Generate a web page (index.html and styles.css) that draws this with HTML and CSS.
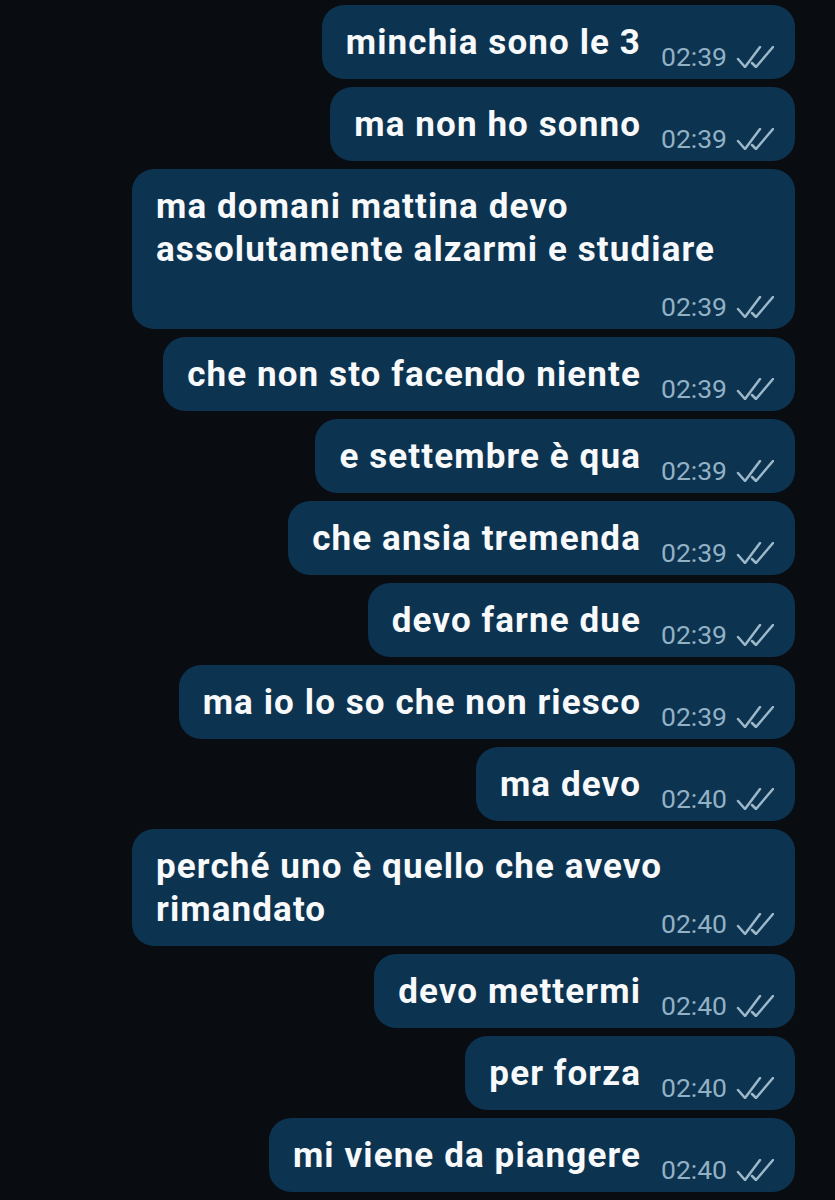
FILE: index.html
```html
<!DOCTYPE html>
<html lang="it">
<head>
<meta charset="utf-8">
<title>Chat</title>
<link rel="stylesheet" href="styles.css">
</head>
<body>
<div class="chat">
  <div class="bubble"><p class="text">minchia sono le 3<span class="meta"><span class="time">02:39</span><svg class="ticks" viewBox="0 0 38 22"><path d="M2 13 L9 21 L24 1"/><path d="M16 17 L20 21 L37 1"/></svg></span></p></div>
  <div class="bubble"><p class="text">ma non ho sonno<span class="meta"><span class="time">02:39</span><svg class="ticks" viewBox="0 0 38 22"><path d="M2 13 L9 21 L24 1"/><path d="M16 17 L20 21 L37 1"/></svg></span></p></div>
  <div class="bubble"><p class="text">ma domani mattina devo assolutamente alzarmi e studiare<span class="meta"><span class="time">02:39</span><svg class="ticks" viewBox="0 0 38 22"><path d="M2 13 L9 21 L24 1"/><path d="M16 17 L20 21 L37 1"/></svg></span></p></div>
  <div class="bubble"><p class="text">che non sto facendo niente<span class="meta"><span class="time">02:39</span><svg class="ticks" viewBox="0 0 38 22"><path d="M2 13 L9 21 L24 1"/><path d="M16 17 L20 21 L37 1"/></svg></span></p></div>
  <div class="bubble"><p class="text">e settembre è qua<span class="meta"><span class="time">02:39</span><svg class="ticks" viewBox="0 0 38 22"><path d="M2 13 L9 21 L24 1"/><path d="M16 17 L20 21 L37 1"/></svg></span></p></div>
  <div class="bubble"><p class="text">che ansia tremenda<span class="meta"><span class="time">02:39</span><svg class="ticks" viewBox="0 0 38 22"><path d="M2 13 L9 21 L24 1"/><path d="M16 17 L20 21 L37 1"/></svg></span></p></div>
  <div class="bubble"><p class="text">devo farne due<span class="meta"><span class="time">02:39</span><svg class="ticks" viewBox="0 0 38 22"><path d="M2 13 L9 21 L24 1"/><path d="M16 17 L20 21 L37 1"/></svg></span></p></div>
  <div class="bubble"><p class="text">ma io lo so che non riesco<span class="meta"><span class="time">02:39</span><svg class="ticks" viewBox="0 0 38 22"><path d="M2 13 L9 21 L24 1"/><path d="M16 17 L20 21 L37 1"/></svg></span></p></div>
  <div class="bubble"><p class="text">ma devo<span class="meta"><span class="time">02:40</span><svg class="ticks" viewBox="0 0 38 22"><path d="M2 13 L9 21 L24 1"/><path d="M16 17 L20 21 L37 1"/></svg></span></p></div>
  <div class="bubble"><p class="text">perché uno è quello che avevo rimandato<span class="meta"><span class="time">02:40</span><svg class="ticks" viewBox="0 0 38 22"><path d="M2 13 L9 21 L24 1"/><path d="M16 17 L20 21 L37 1"/></svg></span></p></div>
  <div class="bubble"><p class="text">devo mettermi<span class="meta"><span class="time">02:40</span><svg class="ticks" viewBox="0 0 38 22"><path d="M2 13 L9 21 L24 1"/><path d="M16 17 L20 21 L37 1"/></svg></span></p></div>
  <div class="bubble"><p class="text">per forza<span class="meta"><span class="time">02:40</span><svg class="ticks" viewBox="0 0 38 22"><path d="M2 13 L9 21 L24 1"/><path d="M16 17 L20 21 L37 1"/></svg></span></p></div>
  <div class="bubble"><p class="text">mi viene da piangere<span class="meta"><span class="time">02:40</span><svg class="ticks" viewBox="0 0 38 22"><path d="M2 13 L9 21 L24 1"/><path d="M16 17 L20 21 L37 1"/></svg></span></p></div>
</div>
</body>
</html>
```

FILE: styles.css
```css
html, body {
  margin: 0;
  padding: 0;
  background: #090c11;
}

body {
  font-family: Roboto, "Noto Sans", sans-serif;
  width: 835px;
  height: 1200px;
  overflow: hidden;
}

.chat {
  display: flex;
  flex-direction: column;
  align-items: flex-end;
  gap: 8px;
  padding: 5px 40px 0 0;
}

.bubble {
  box-sizing: border-box;
  max-width: 663px;
  display: flow-root;
  padding: 16px 21px 7px 24px;
  background: #0c3350;
  border-radius: 22px;
}

.text {
  margin: 0;
  color: #f7f9fb;
  font-weight: 700;
  font-size: 35px;
  line-height: 43px;
  letter-spacing: 1.1px;
}

.meta {
  float: right;
  margin: 21px 0 0 20px;
  display: flex;
  align-items: center;
  gap: 9px;
  height: 30px;
  letter-spacing: 0;
}

.time {
  color: #93b1c4;
  font-size: 26.5px;
  line-height: 30px;
  font-weight: 400;
}

.ticks {
  width: 38px;
  height: 22px;
  fill: none;
  stroke: #9db8c9;
  stroke-width: 2.5;
  stroke-linecap: round;
  stroke-linejoin: round;
}
```
